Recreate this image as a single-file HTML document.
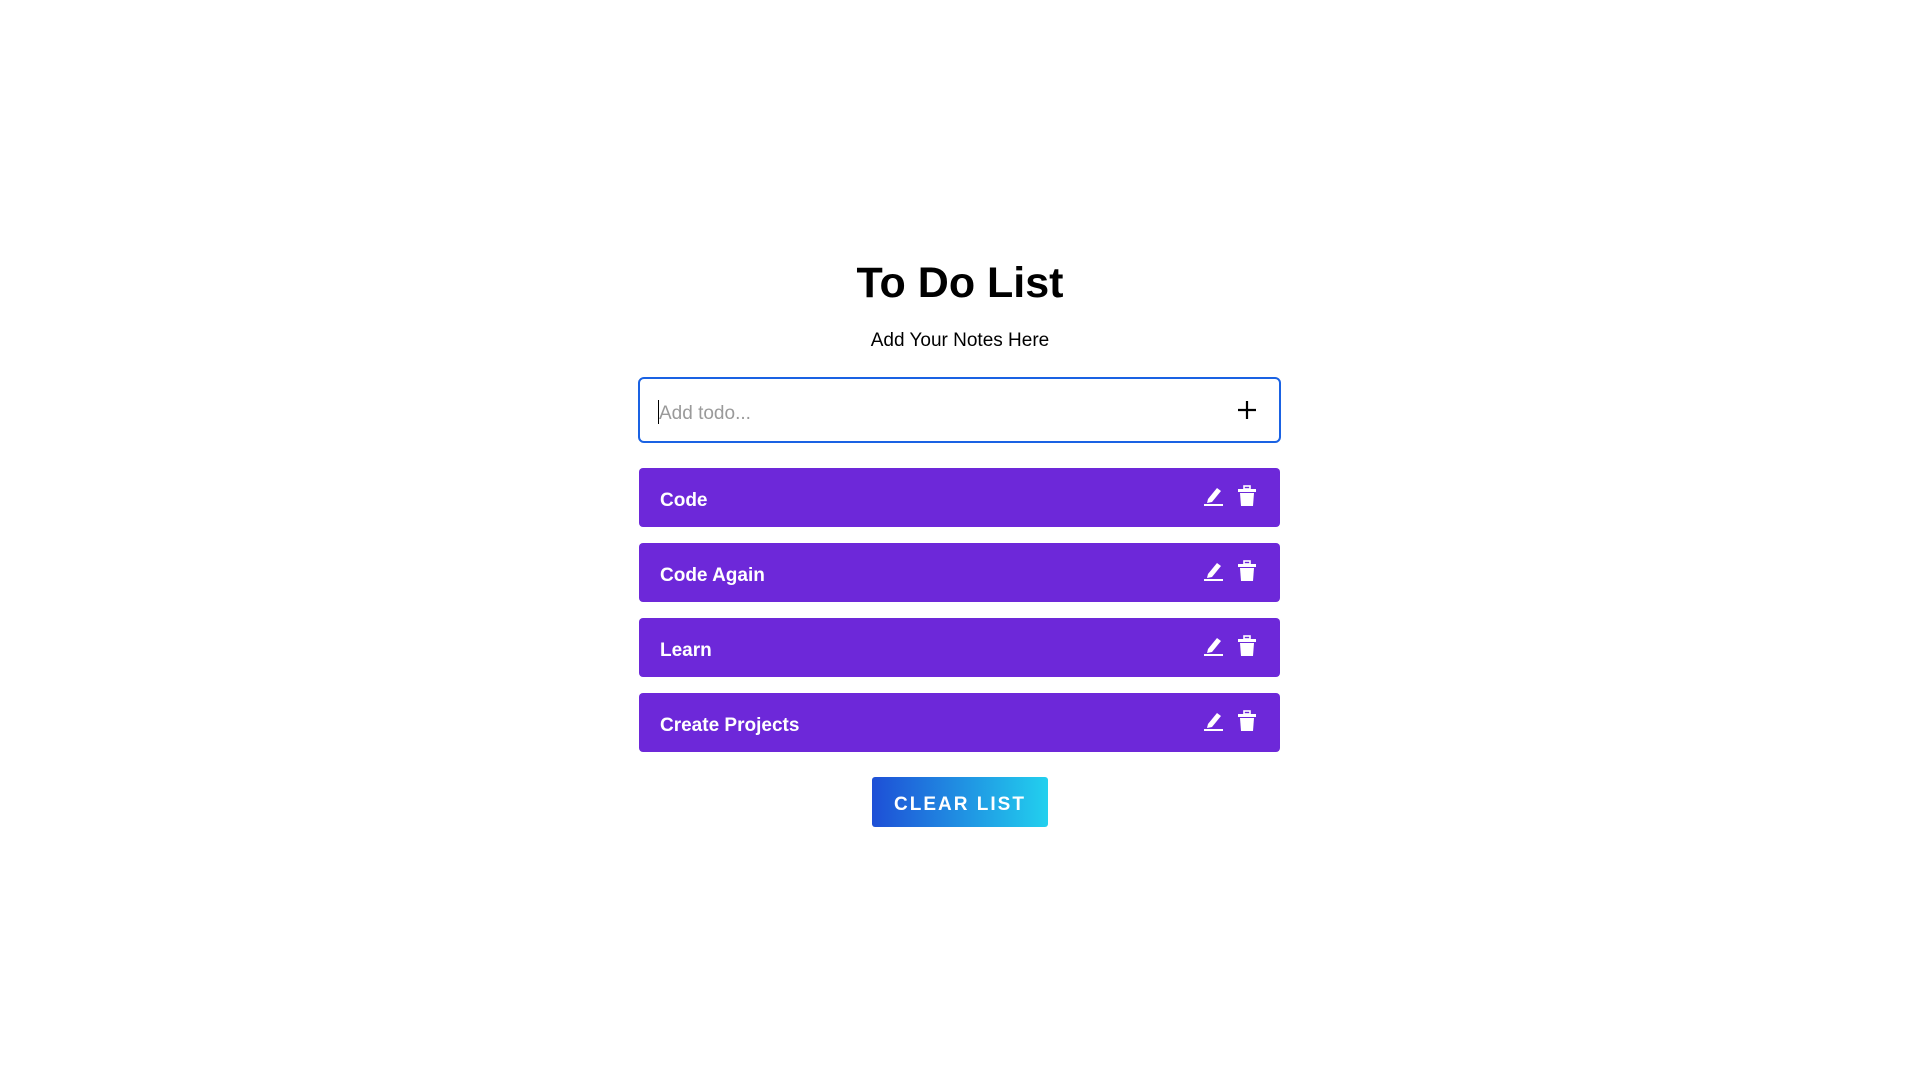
<!DOCTYPE html>
<html><head><style>
html,body{margin:0;padding:0;background:#fff;width:1920px;height:1080px;overflow:hidden;font-family:"Segoe UI","Liberation Sans",sans-serif;}
h1{position:absolute;left:0;width:1920px;top:255px;margin:0;text-align:center;font-size:43px;font-weight:600;color:#000;line-height:56px;}
.sub{position:absolute;left:0;width:1920px;top:328px;text-align:center;font-size:19px;color:#000;line-height:26px;}
.inp{position:absolute;left:638px;top:377px;width:639px;height:62px;border:2px solid #1a62e3;border-radius:6px;box-sizing:content-box;}
.inp .ph{position:absolute;left:19px;top:22px;font-size:19px;color:#9a9a9a;line-height:26px;}
.inp .caret{position:absolute;left:18px;top:21px;width:1px;height:24px;background:#000;}
.inp .plus{position:absolute;left:596px;top:20px;}
.item{position:absolute;left:639px;width:641px;height:59px;background:#6d28d9;border-radius:4px;color:#fff;font-size:19px;font-weight:600;}
.item span{position:absolute;left:21px;top:20px;line-height:26px;}
.item svg{position:absolute;top:17px;}
.btn{position:absolute;left:872px;top:777px;width:176px;height:50px;border-radius:3px;background:linear-gradient(90deg,#1e4fd6,#22d0ee);color:#fff;font-weight:700;font-size:19px;letter-spacing:2px;text-align:center;line-height:50px;padding-top:3px;box-sizing:border-box;}
</style></head><body>
<h1>To Do List</h1>
<div class="sub">Add Your Notes Here</div>
<div class="inp"><div class="caret"></div><div class="ph">Add todo...</div>
<svg class="plus" width="22" height="22" viewBox="0 0 22 22"><path d="M11 2V20M2 11H20" stroke="#000" stroke-width="2.2"/></svg></div>

<div class="item" style="top:468px"><span>Code</span>
<svg style="left:563px" width="22" height="22" viewBox="0 0 22 22"><path d="M6 14L15 3L19 6L10 17L5 18Z" fill="#fff"/><rect x="2" y="19" width="19" height="2" fill="#fff"/></svg>
<svg style="left:598px" width="20" height="22" viewBox="0 0 20 22"><rect x="7" y="1" width="6" height="3" fill="none" stroke="#fff" stroke-width="1.6"/><rect x="1" y="4" width="18" height="3" fill="#fff"/><path d="M3 8H17L16 21H4Z" fill="#fff"/></svg></div>
<div class="item" style="top:543px"><span>Code Again</span>
<svg style="left:563px" width="22" height="22" viewBox="0 0 22 22"><path d="M6 14L15 3L19 6L10 17L5 18Z" fill="#fff"/><rect x="2" y="19" width="19" height="2" fill="#fff"/></svg>
<svg style="left:598px" width="20" height="22" viewBox="0 0 20 22"><rect x="7" y="1" width="6" height="3" fill="none" stroke="#fff" stroke-width="1.6"/><rect x="1" y="4" width="18" height="3" fill="#fff"/><path d="M3 8H17L16 21H4Z" fill="#fff"/></svg></div>
<div class="item" style="top:618px"><span>Learn</span>
<svg style="left:563px" width="22" height="22" viewBox="0 0 22 22"><path d="M6 14L15 3L19 6L10 17L5 18Z" fill="#fff"/><rect x="2" y="19" width="19" height="2" fill="#fff"/></svg>
<svg style="left:598px" width="20" height="22" viewBox="0 0 20 22"><rect x="7" y="1" width="6" height="3" fill="none" stroke="#fff" stroke-width="1.6"/><rect x="1" y="4" width="18" height="3" fill="#fff"/><path d="M3 8H17L16 21H4Z" fill="#fff"/></svg></div>
<div class="item" style="top:693px"><span>Create Projects</span>
<svg style="left:563px" width="22" height="22" viewBox="0 0 22 22"><path d="M6 14L15 3L19 6L10 17L5 18Z" fill="#fff"/><rect x="2" y="19" width="19" height="2" fill="#fff"/></svg>
<svg style="left:598px" width="20" height="22" viewBox="0 0 20 22"><rect x="7" y="1" width="6" height="3" fill="none" stroke="#fff" stroke-width="1.6"/><rect x="1" y="4" width="18" height="3" fill="#fff"/><path d="M3 8H17L16 21H4Z" fill="#fff"/></svg></div>

<div class="btn">CLEAR LIST</div>
</body></html>
